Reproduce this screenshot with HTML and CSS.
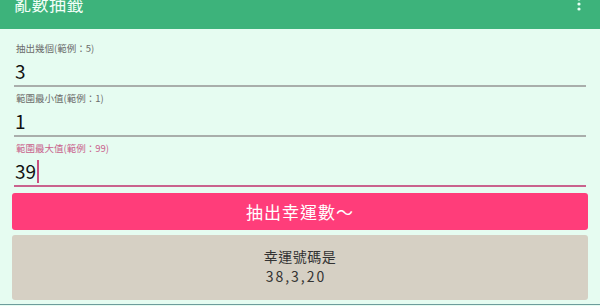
FILE: index.html
```html
<!DOCTYPE html>
<html lang="zh-Hant">
<head>
<meta charset="utf-8">
<title>亂數抽籤</title>
<link rel="stylesheet" href="styles.css">
</head>
<body>
<div class="screen">
  <header class="appbar">
    <span class="title">亂數抽籤</span>
    <svg class="menu" width="4" height="14" viewBox="0 0 4 14"><circle cx="2" cy="1" r="1.6"/><circle cx="2" cy="6" r="1.6"/><circle cx="2" cy="11" r="1.6"/></svg>
  </header>
  <main class="content">
    <div class="field">
      <div class="label">抽出幾個(範例：5)</div>
      <div class="value">3</div>
    </div>
    <div class="field">
      <div class="label">範圍最小值(範例：1)</div>
      <div class="value">1</div>
    </div>
    <div class="field focused">
      <div class="label">範圍最大值(範例：99)</div>
      <div class="value">39<span class="caret"></span></div>
    </div>
    <button class="draw">抽出幸運數～</button>
    <div class="result">
      <div>幸運號碼是</div>
      <div class="nums">38,3,20</div>
    </div>
  </main>
  <div class="bottomline"></div>
</div>
</body>
</html>
```
FILE: styles.css
```css
html, body {
  margin: 0;
  padding: 0;
}
body {
  background: #e6fcf1;
  font-family: "Noto Sans CJK TC", "Noto Sans", sans-serif;
  color: #222;
}
.screen {
  width: 600px;
  height: 306px;
  overflow: hidden;
  display: flex;
  flex-direction: column;
}
.appbar {
  height: 29px;
  flex: none;
  background: #3db37b;
  display: flex;
  align-items: flex-start;
  justify-content: space-between;
  padding: 0 19px 0 14px;
  overflow: hidden;
}
.title {
  color: #f4fff9;
  font-size: 17px;
  font-weight: 400;
  line-height: 20px;
  margin-top: -6px;
  letter-spacing: 0.5px;
}
.menu {
  fill: #e8fff4;
  margin-top: -2px;
}
.content {
  flex: 1;
  padding: 8px 12px 0;
  display: flex;
  flex-direction: column;
}
.field {
  margin: 0 2px;
  padding-top: 5px;
  padding-bottom: 2px;
  border-bottom: 2px solid #a9aeab;
}
.label {
  font-size: 9.5px;
  line-height: 12px;
  color: #6b6b6b;
  padding-left: 2px;
}
.value {
  margin-top: 5px;
  font-size: 19px;
  line-height: 24px;
  color: #111;
  padding-left: 1px;
  display: flex;
  align-items: center;
}
.focused {
  border-bottom-color: #c9628d;
}
.focused .label {
  color: #c9628d;
}
.caret {
  display: inline-block;
  width: 2px;
  height: 23px;
  background: #c9507f;
  margin-left: 1px;
}
.draw {
  margin-top: 6px;
  height: 37px;
  border: none;
  border-radius: 3px;
  background: #ff3d7a;
  color: #fff;
  font-family: "Noto Sans CJK TC", sans-serif;
  font-size: 17px;
  letter-spacing: 1px;
  padding: 0;
}
.result {
  margin-top: 5px;
  height: 65px;
  border-radius: 3px;
  background: #d6d0c4;
  display: flex;
  flex-direction: column;
  align-items: center;
  justify-content: center;
  font-size: 14px;
  line-height: 20px;
  color: #333;
  letter-spacing: 0.5px;
  padding-bottom: 3px;
  box-sizing: border-box;
}
.nums {
  letter-spacing: 2px;
  margin-right: 8px;
}
.bottomline {
  height: 1px;
  flex: none;
  margin-top: -2px;
  margin-bottom: 1px;
  background: #6e9c9c;
}
```
